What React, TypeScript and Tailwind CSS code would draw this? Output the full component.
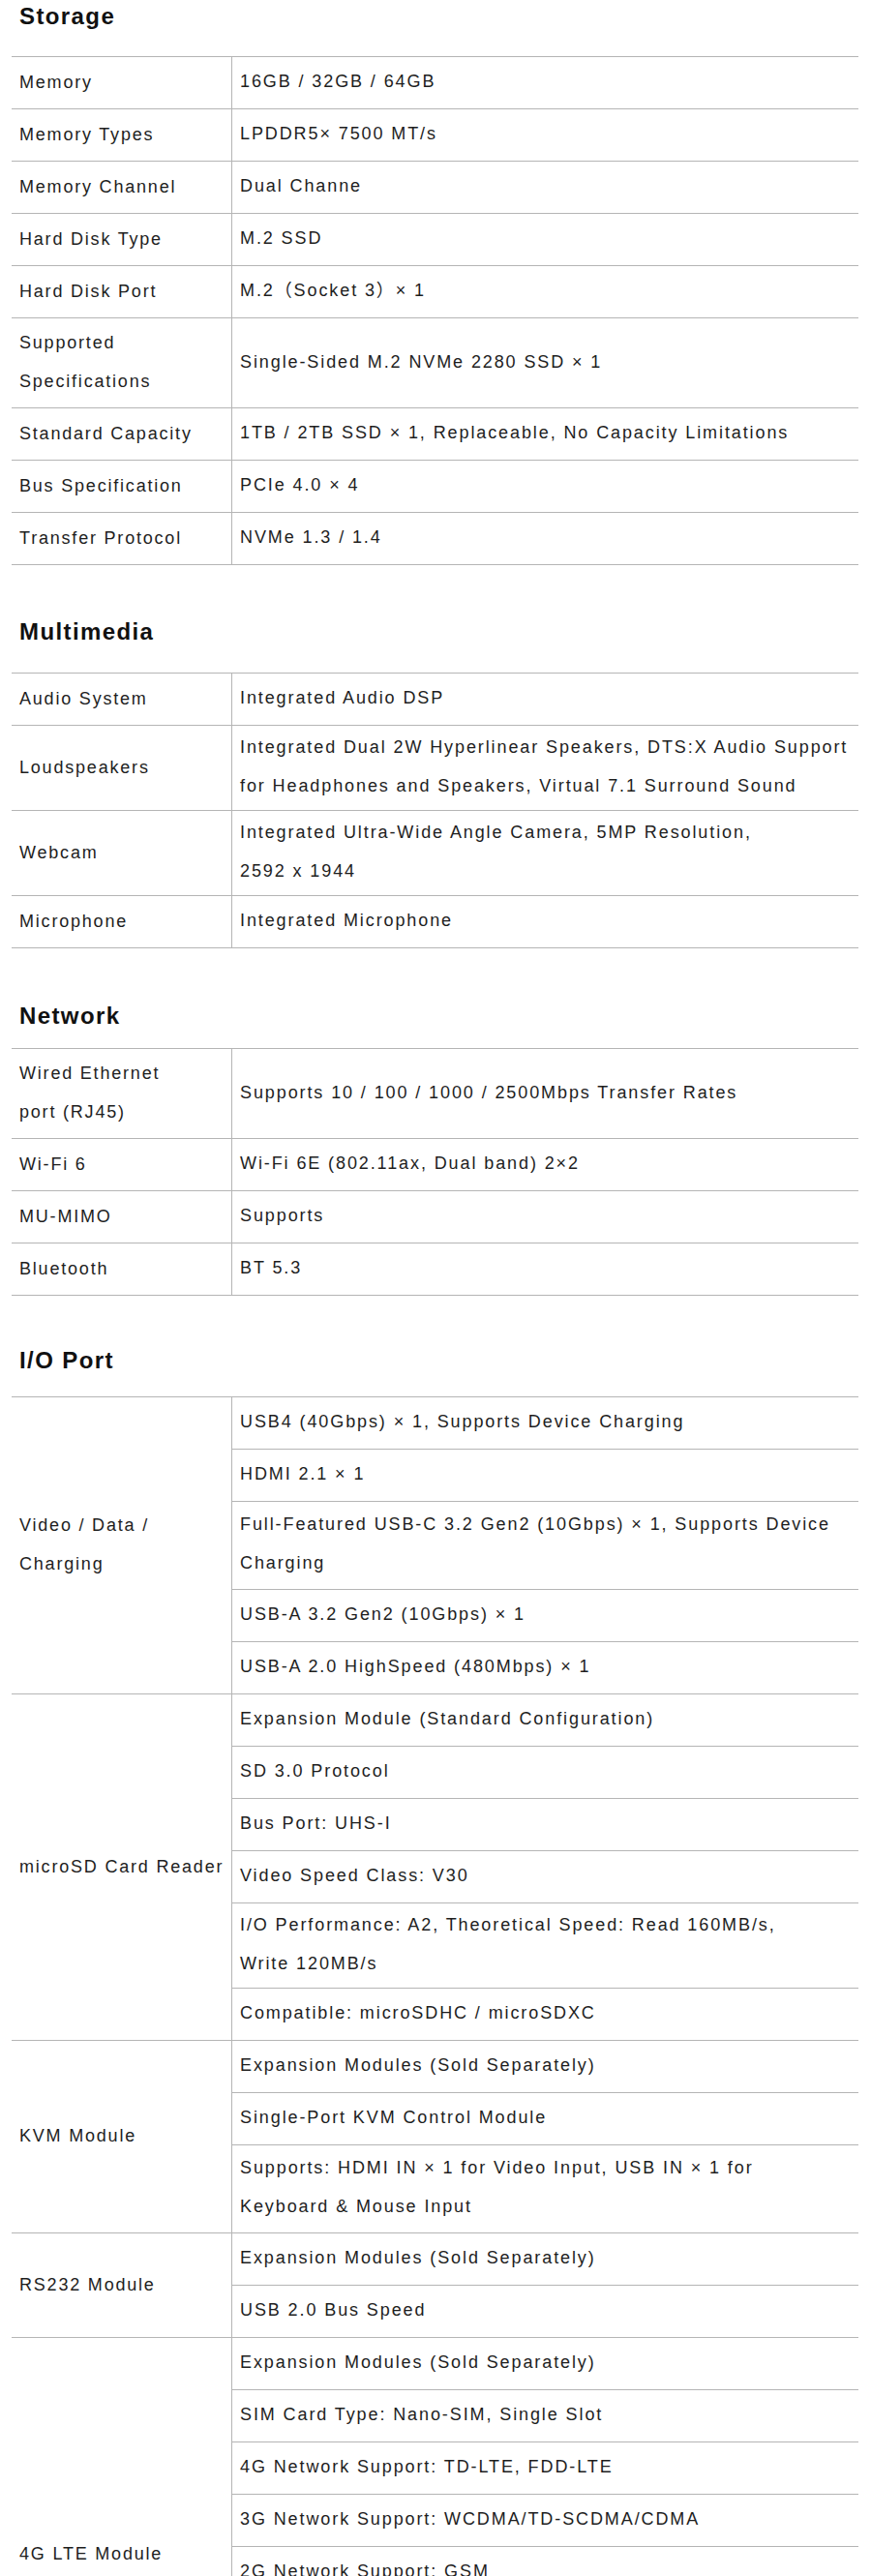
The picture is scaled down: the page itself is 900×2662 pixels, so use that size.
import React from 'react';

type Item = { text: string; tall?: boolean };
type Row = { label: string; items: Item[] };
type Section = { title: string; top: string; gap: string; rows: Row[] };

const v = (text: string, tall = false): Item => ({ text, tall });
const one = (label: string, text: string): Row => ({ label, items: [v(text)] });

const sections: Section[] = [
  {
    title: 'Storage',
    top: 'mt-[1px]',
    gap: 'mt-[25px]',
    rows: [
      one('Memory', '16GB / 32GB / 64GB'),
      one('Memory Types', 'LPDDR5× 7500 MT/s'),
      one('Memory Channel', 'Dual Channe'),
      one('Hard Disk Type', 'M.2 SSD'),
      one('Hard Disk Port', 'M.2（Socket 3）× 1'),
      one('Supported\nSpecifications', 'Single-Sided M.2 NVMe 2280 SSD × 1'),
      one('Standard Capacity', '1TB / 2TB SSD × 1, Replaceable, No Capacity Limitations'),
      one('Bus Specification', 'PCIe 4.0 × 4'),
      one('Transfer Protocol', 'NVMe 1.3 / 1.4'),
    ],
  },
  {
    title: 'Multimedia',
    top: 'mt-[53px]',
    gap: 'mt-[26px]',
    rows: [
      one('Audio System', 'Integrated Audio DSP'),
      one(
        'Loudspeakers',
        'Integrated Dual 2W Hyperlinear Speakers, DTS:X Audio Support\nfor Headphones and Speakers, Virtual 7.1 Surround Sound'
      ),
      one('Webcam', 'Integrated Ultra-Wide Angle Camera, 5MP Resolution,\n2592 x 1944'),
      one('Microphone', 'Integrated Microphone'),
    ],
  },
  {
    title: 'Network',
    top: 'mt-[54px]',
    gap: 'mt-[17px]',
    rows: [
      one('Wired Ethernet\nport (RJ45)', 'Supports 10 / 100 / 1000 / 2500Mbps Transfer Rates'),
      one('Wi-Fi 6', 'Wi-Fi 6E (802.11ax, Dual band) 2×2'),
      one('MU-MIMO', 'Supports'),
      one('Bluetooth', 'BT 5.3'),
    ],
  },
  {
    title: 'I/O Port',
    top: 'mt-[51px]',
    gap: 'mt-[21px]',
    rows: [
      {
        label: 'Video / Data /\nCharging',
        items: [
          v('USB4 (40Gbps) × 1, Supports Device Charging'),
          v('HDMI 2.1 × 1'),
          v('Full-Featured USB-C 3.2 Gen2 (10Gbps) × 1, Supports Device\nCharging', true),
          v('USB-A 3.2 Gen2 (10Gbps) × 1'),
          v('USB-A 2.0 HighSpeed (480Mbps) × 1'),
        ],
      },
      {
        label: 'microSD Card Reader',
        items: [
          v('Expansion Module (Standard Configuration)'),
          v('SD 3.0 Protocol'),
          v('Bus Port: UHS-I'),
          v('Video Speed Class: V30'),
          v('I/O Performance: A2, Theoretical Speed: Read 160MB/s,\nWrite 120MB/s'),
          v('Compatible: microSDHC / microSDXC'),
        ],
      },
      {
        label: 'KVM Module',
        items: [
          v('Expansion Modules (Sold Separately)'),
          v('Single-Port KVM Control Module'),
          v('Supports: HDMI IN × 1 for Video Input, USB IN × 1 for\nKeyboard & Mouse Input', true),
        ],
      },
      {
        label: 'RS232 Module',
        items: [v('Expansion Modules (Sold Separately)'), v('USB 2.0 Bus Speed')],
      },
      {
        label: '4G LTE Module',
        items: [
          v('Expansion Modules (Sold Separately)'),
          v('SIM Card Type: Nano-SIM, Single Slot'),
          v('4G Network Support: TD-LTE, FDD-LTE'),
          v('3G Network Support: WCDMA/TD-SCDMA/CDMA'),
          v('2G Network Support: GSM'),
          v('Antenna: Built-in Main and Diversity Antennas,\nSupports MIMO Reception', true),
          v('Theoretical Speed: Download 150Mbps,\nUpload 50Mbps'),
        ],
      },
    ],
  },
];

function SpecGroup({ row }: { row: Row }) {
  return (
    <div className="grid grid-cols-[228px_1fr] border-b border-[#b5b5b5]">
      <div className="flex items-center whitespace-pre-line border-r border-[#b5b5b5] pl-[8px] pr-0 pt-[5px] pb-[7px] leading-[40px] tracking-[1.8px]">
        {row.label}
      </div>
      <div className="flex flex-col divide-y divide-[#b5b5b5]">
        {row.items.map((item, i) => (
          <div
            key={i}
            className={
              item.tall
                ? 'flex min-h-[54px] grow items-center whitespace-pre-line pl-[8px] pr-[2px] pt-[3px] pb-[7px] leading-[40px] last:min-h-[53px]'
                : 'flex min-h-[54px] grow items-center whitespace-pre-line pl-[8px] pr-[2px] pt-[2px] pb-[5px] leading-[40px] last:min-h-[53px]'
            }
          >
            {item.text}
          </div>
        ))}
      </div>
    </div>
  );
}

export default function App() {
  return (
    <div className="min-h-screen bg-white pl-[12px] pr-[13px] font-['Liberation_Sans','Noto_Sans_CJK_SC',sans-serif] text-[18px] tracking-[1.9px] text-[#1e1e1e]">
      {sections.map((s) => (
        <section key={s.title} className={s.top}>
          <h2 className="pl-[8px] text-[24px] font-bold leading-[32px] tracking-[1.4px] text-[#111]">
            {s.title}
          </h2>
          <div className={`${s.gap} border-t border-[#b5b5b5]`}>
            {s.rows.map((row) => (
              <SpecGroup key={row.label} row={row} />
            ))}
          </div>
        </section>
      ))}
    </div>
  );
}
